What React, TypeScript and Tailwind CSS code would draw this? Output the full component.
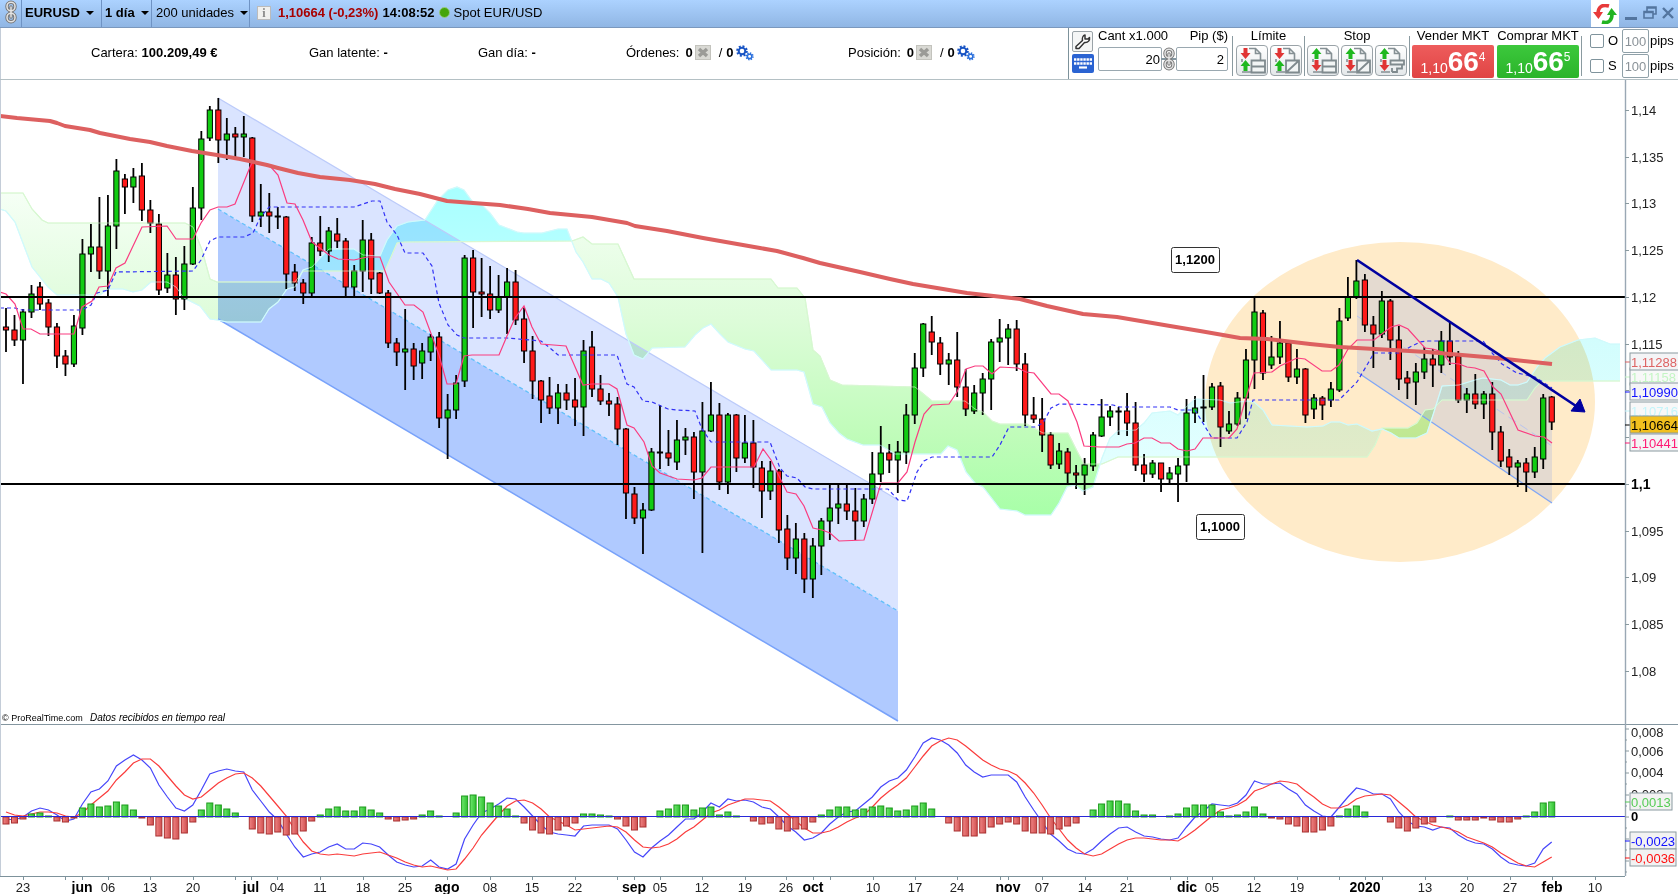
import type { ReactNode } from 'react';

type Candle = [high: number, top: number, bottom: number, low: number, up: 0 | 1];

const STEP = 8.493;
const FIRST_X = 6;
const AXIS_X = 1625;
const ZERO_Y = 817;

const xAt = (i: number) => FIRST_X + i * STEP;

// high, body top, body bottom, low, 1 = up day
const candles: Candle[] = [
  [308, 327, 330, 352, 0], [315, 330, 340, 346, 0], [309, 312, 340, 384, 1], [285, 294, 312, 318, 1],
  [282, 287, 304, 310, 0], [299, 303, 327, 336, 0], [323, 327, 356, 368, 0], [350, 356, 364, 376, 0],
  [315, 326, 364, 367, 1], [239, 254, 328, 335, 1], [224, 247, 254, 272, 1], [197, 247, 271, 279, 0],
  [195, 226, 271, 296, 1], [159, 171, 226, 249, 1], [174, 179, 187, 214, 0], [168, 177, 187, 203, 1],
  [163, 176, 210, 221, 0], [200, 210, 223, 233, 0], [214, 224, 290, 295, 0], [253, 275, 288, 293, 1],
  [257, 275, 299, 315, 0], [246, 264, 299, 310, 1], [187, 208, 264, 265, 1], [131, 139, 208, 220, 1],
  [106, 110, 138, 141, 1], [98, 110, 140, 163, 0], [118, 134, 140, 160, 1], [127, 134, 137, 158, 0],
  [116, 134, 137, 157, 1], [137, 138, 216, 222, 0], [184, 212, 216, 227, 1], [193, 212, 216, 233, 0],
  [207, 216, 217, 229, 0], [216, 217, 274, 289, 0], [264, 272, 283, 291, 0], [279, 283, 293, 304, 0],
  [237, 243, 293, 296, 1], [216, 243, 251, 256, 0], [227, 231, 251, 262, 1], [218, 234, 241, 248, 0],
  [238, 241, 287, 296, 0], [265, 271, 287, 296, 1], [220, 240, 271, 292, 1], [233, 240, 279, 294, 0],
  [272, 273, 293, 294, 0], [290, 293, 343, 348, 0], [338, 343, 352, 366, 0], [309, 349, 352, 390, 1],
  [343, 349, 366, 380, 0], [343, 351, 363, 379, 1], [334, 337, 352, 361, 1], [332, 337, 418, 428, 0],
  [394, 410, 418, 459, 1], [375, 383, 410, 419, 1], [255, 258, 381, 387, 1], [250, 258, 292, 328, 0],
  [258, 292, 294, 317, 0], [266, 294, 310, 319, 0], [275, 297, 310, 313, 1], [268, 282, 297, 334, 1],
  [270, 282, 320, 325, 0], [307, 319, 351, 363, 0], [336, 351, 381, 399, 0], [380, 381, 400, 423, 0],
  [377, 396, 408, 414, 0], [384, 393, 408, 424, 1], [384, 393, 400, 410, 0], [378, 400, 407, 426, 0],
  [340, 351, 407, 436, 1], [331, 347, 389, 397, 0], [375, 389, 401, 405, 0], [393, 401, 404, 416, 0],
  [397, 404, 429, 445, 0], [428, 429, 493, 519, 0], [487, 494, 518, 524, 0], [503, 510, 518, 554, 1],
  [448, 452, 510, 511, 1], [405, 452, 453, 469, 0], [430, 453, 458, 466, 0], [420, 440, 462, 470, 1],
  [428, 437, 440, 455, 1], [432, 437, 472, 499, 0], [402, 431, 472, 553, 1], [382, 415, 431, 432, 1],
  [403, 415, 482, 490, 0], [413, 415, 482, 494, 1], [414, 415, 458, 472, 0], [415, 443, 458, 463, 1],
  [420, 443, 467, 488, 0], [461, 468, 491, 518, 0], [461, 471, 491, 500, 1], [469, 471, 530, 543, 0],
  [515, 529, 558, 570, 0], [523, 539, 558, 574, 1], [533, 539, 579, 593, 0], [538, 546, 579, 598, 1],
  [518, 521, 546, 575, 1], [484, 508, 521, 540, 1], [485, 504, 508, 524, 1], [484, 504, 511, 520, 0],
  [488, 511, 521, 540, 0], [494, 499, 521, 527, 1], [452, 474, 499, 504, 1], [426, 453, 474, 482, 1],
  [444, 453, 460, 473, 0], [441, 452, 460, 493, 1], [404, 415, 452, 464, 1], [353, 368, 415, 424, 1],
  [323, 324, 368, 377, 1], [316, 332, 342, 355, 0], [337, 343, 364, 375, 0], [353, 360, 364, 385, 1],
  [332, 360, 387, 397, 0], [369, 387, 409, 416, 0], [385, 393, 411, 414, 1], [373, 379, 393, 415, 1],
  [339, 342, 379, 410, 1], [319, 338, 342, 362, 1], [324, 329, 338, 365, 1], [320, 329, 364, 371, 0],
  [353, 364, 415, 426, 0], [397, 415, 419, 423, 0], [398, 419, 435, 452, 0], [432, 435, 465, 469, 0],
  [443, 451, 464, 469, 1], [448, 452, 473, 483, 0], [465, 473, 475, 489, 0], [458, 465, 475, 495, 1],
  [432, 435, 466, 471, 1], [399, 417, 436, 437, 1], [406, 411, 417, 426, 1], [407, 411, 412, 435, 0],
  [393, 411, 423, 436, 0], [402, 423, 465, 471, 0], [454, 465, 474, 482, 0], [460, 463, 474, 478, 1],
  [463, 463, 479, 492, 0], [467, 473, 479, 483, 1], [458, 466, 474, 502, 1], [399, 413, 465, 482, 1],
  [396, 408, 413, 423, 1], [375, 407, 408, 422, 0], [383, 387, 407, 410, 1], [382, 386, 427, 447, 0],
  [411, 424, 431, 434, 1], [392, 398, 424, 426, 1], [349, 360, 398, 419, 1], [297, 312, 360, 389, 1],
  [310, 313, 373, 380, 0], [336, 357, 365, 369, 1], [321, 343, 357, 364, 1], [342, 343, 377, 382, 0],
  [349, 369, 377, 384, 1], [368, 369, 415, 423, 0], [394, 398, 409, 419, 1], [396, 398, 405, 420, 0],
  [382, 389, 400, 407, 1], [308, 321, 390, 392, 1], [277, 297, 318, 321, 1], [260, 281, 297, 299, 1],
  [274, 280, 325, 332, 0], [316, 325, 334, 368, 0], [291, 301, 334, 338, 1], [299, 301, 340, 360, 0],
  [326, 340, 379, 390, 0], [371, 378, 383, 399, 0], [363, 372, 382, 405, 1], [347, 359, 372, 379, 1],
  [349, 359, 365, 387, 0], [331, 341, 365, 373, 1], [322, 341, 357, 365, 0], [351, 356, 400, 403, 0],
  [388, 394, 400, 413, 1], [374, 394, 404, 409, 0], [391, 394, 404, 419, 1], [382, 394, 432, 450, 0],
  [426, 432, 461, 467, 0], [449, 457, 467, 475, 0], [460, 463, 467, 487, 1], [458, 463, 472, 492, 0],
  [447, 457, 472, 478, 1], [394, 398, 459, 469, 1], [396, 397, 422, 430, 0],
];

const average200 =
  '0,116 17,118 50,121 57,123 65,126 90,130 100,133 130,139 150,142 167,146 192,151 217,155 240,159 267,165 278,168 298,173 320,177 350,180 375,184 395,189 420,194 447,201 473,203 500,205 528,209 550,213 592,217 627,223 635,226 667,231 703,238 760,248 777,251 803,258 820,263 860,272 890,279 913,284 967,293 1020,299 1047,306 1083,314 1117,317 1170,326 1200,331 1223,335 1240,338 1267,339 1310,344 1340,347 1427,352 1497,358 1552,364';

const tenkan =
  '0,292 6,294 15,304 23,329 31,329 40,334 74,334 82,307 92,301 99,287 108,286 116,268 125,263 142,227 167,226 176,239 193,239 201,223 210,210 218,207 227,207 235,204 250,167 253,161 270,166 278,175 287,203 295,204 303,220 312,242 329,255 338,259 354,260 367,257 380,257 389,282 405,305 414,305 423,312 439,355 447,384 456,384 464,356 472,355 499,355 507,336 515,318 524,306 532,327 541,344 566,346 583,385 592,384 609,384 617,389 627,425 634,428 644,442 652,466 660,473 677,479 694,480 702,478 711,467 754,467 763,449 771,460 787,492 796,494 804,506 813,528 822,530 830,533 839,541 864,540 881,483 898,483 907,472 915,442 924,414 932,405 949,404 957,392 966,369 975,366 983,366 992,374 1000,367 1018,368 1026,372 1034,373 1051,394 1059,394 1068,401 1077,422 1084,446 1100,447 1119,447 1127,444 1135,443 1144,438 1152,438 1161,443 1170,443 1178,449 1187,451 1195,449 1203,438 1229,438 1237,429 1246,398 1254,373 1272,372 1280,366 1297,358 1305,359 1322,371 1331,371 1339,365 1348,349 1357,340 1374,340 1391,327 1399,325 1408,329 1425,348 1433,349 1442,352 1450,363 1459,364 1467,367 1475,368 1484,371 1493,387 1501,394 1510,413 1518,430 1535,436 1544,437 1552,443';

const kijun =
  '0,308 15,308 22,310 82,310 91,305 97,293 108,290 116,272 193,271 201,260 210,241 218,237 244,237 253,233 260,218 269,207 354,207 372,201 380,201 387,222 397,235 405,253 423,253 432,266 439,303 448,325 457,335 464,338 507,338 541,341 550,348 558,355 617,355 627,384 634,387 643,401 652,402 668,409 677,410 695,411 702,429 711,442 770,442 780,468 787,476 797,478 805,487 813,489 888,489 898,500 907,501 912,487 917,472 924,461 932,457 992,457 1000,445 1009,427 1035,427 1043,423 1051,408 1059,404 1113,405 1120,407 1170,407 1178,410 1195,410 1212,438 1237,438 1247,422 1253,400 1339,400 1357,382 1367,365 1374,353 1399,353 1410,347 1420,342 1428,341 1483,341 1493,354 1502,364 1517,373 1535,377 1552,388';

const spanA =
  '0,209 6,211 15,222 32,267 48,287 57,295 100,295 108,289 123,289 133,292 142,290 151,282 167,282 176,287 184,298 200,306 210,319 217,320 227,322 261,322 269,309 278,302 287,289 295,287 303,270 312,267 320,258 329,249 354,249 363,255 380,256 387,240 397,226 408,222 425,220 438,200 448,190 457,187 464,190 472,201 482,205 490,213 499,225 517,232 524,233 542,233 558,229 567,229 576,252 583,262 592,279 601,279 609,283 618,297 626,334 634,355 643,359 652,348 685,347 695,335 703,328 711,324 720,334 728,342 745,349 754,351 771,370 797,370 804,372 813,404 822,407 830,423 839,433 847,439 863,445 880,445 895,454 941,454 948,446 957,450 966,472 975,483 983,487 1000,509 1017,511 1025,515 1051,515 1059,503 1067,487 1075,485 1083,491 1093,487 1102,458 1110,438 1118,431 1136,430 1144,423 1152,413 1170,411 1178,415 1185,408 1192,402 1195,399 1220,400 1230,403 1247,401 1254,402 1263,410 1272,425 1307,427 1323,426 1331,422 1340,422 1348,425 1357,424 1372,431 1382,429 1391,433 1399,438 1416,438 1427,433 1433,415 1442,386 1459,385 1475,380 1483,378 1501,380 1510,385 1518,385 1527,382 1537,367 1545,358 1560,347 1578,340 1595,338 1610,344 1620,344';

const spanB =
  '0,193 23,193 32,209 42,220 48,223 185,223 193,227 202,250 210,279 217,282 295,282 303,271 385,271 397,243 405,242 572,241 583,237 592,244 618,244 634,279 771,279 778,288 797,288 805,298 813,350 820,356 830,380 842,385 915,387 932,401 965,401 975,409 983,412 992,421 1000,424 1027,424 1043,433 1068,433 1077,451 1084,464 1102,464 1118,457 1367,457 1375,445 1382,428 1408,428 1417,423 1425,410 1433,409 1442,400 1527,400 1535,388 1542,381 1620,381';

const macd = [
  819, 820, 817, 811, 808, 810, 815, 821, 819, 804, 792, 789, 781, 766, 760, 755, 760, 768, 785, 797, 808, 811,
  805, 790, 774, 771, 769, 771, 772, 790, 801, 812, 820, 834, 847, 857, 854, 852, 847, 844, 849, 849, 843, 844,
  847, 855, 862, 865, 867, 866, 860, 867, 869, 864, 839, 825, 813, 809, 804, 798, 799, 807, 816, 825, 832, 834,
  835, 836, 826, 825, 825, 825, 829, 840, 852, 857, 848, 841, 835, 827, 819, 819, 812, 803, 807, 799, 801, 800,
  802, 807, 809, 817, 826, 832, 840, 838, 833, 824, 817, 812, 811, 804, 797, 787, 781, 778, 770, 757, 743, 738,
  740, 745, 753, 765, 772, 777, 775, 775, 775, 782, 797, 810, 822, 834, 841, 849, 853, 854, 849, 841, 834, 828,
  827, 832, 836, 837, 839, 840, 838, 827, 817, 811, 804, 805, 806, 803, 795, 781, 784, 784, 783, 789, 794, 805,
  811, 816, 817, 807, 797, 788, 790, 794, 794, 799, 812, 821, 826, 827, 830, 827, 828, 835, 840, 843, 844, 849,
  857, 863, 865, 866, 863, 849, 842,
];

const signal = [
  812, 815, 816, 814, 812, 812, 813, 816, 817, 813, 805, 798, 791, 780, 772, 763, 759, 759, 766, 776, 786, 795,
  799, 797, 790, 783, 778, 774, 773, 778, 786, 796, 806, 816, 830, 842, 851, 854, 855, 854, 855, 856, 854, 853,
  852, 855, 858, 862, 865, 867, 866, 868, 870, 869, 859, 848, 835, 825, 815, 806, 801, 800, 803, 809, 817, 821,
  825, 830, 829, 828, 827, 826, 827, 832, 840, 847, 848, 847, 844, 839, 832, 827, 820, 813, 810, 805, 802, 799,
  799, 800, 801, 807, 814, 821, 828, 833, 833, 831, 827, 822, 818, 815, 807, 798, 791, 785, 778, 767, 756, 746,
  741, 738, 740, 746, 753, 760, 765, 769, 771, 775, 783, 793, 805, 818, 829, 840, 848, 854, 856, 854, 849, 844,
  840, 838, 838, 839, 840, 840, 841, 836, 830, 823, 816, 810, 808, 805, 800, 791, 788, 784, 781, 782, 784, 791,
  797, 804, 808, 808, 805, 799, 796, 795, 794, 795, 802, 809, 817, 821, 825, 827, 829, 832, 837, 840, 843, 847,
  853, 858, 863, 866, 867, 862, 857,
];

const histogram = [
  -7, -6, -2, 3, 4, 1, -4, -5, -1, 9, 13, 10, 11, 15, 12, 7, -1, -8, -19, -21, -22, -16, -5, 7, 14, 12, 8, 4, 0,
  -12, -16, -17, -15, -18, -17, -14, -4, 2, 8, 10, 6, 6, 10, 7, 4, -2, -4, -3, -2, 2, 6, 1, 0, 4, 21, 22, 20, 14,
  11, 8, 1, -6, -13, -16, -17, -13, -9, -6, 3, 3, 2, 1, -2, -9, -13, -10, 0, 6, 8, 12, 12, 7, 9, 10, 2, 5, 1, 0,
  -4, -7, -6, -12, -14, -12, -12, -5, 2, 7, 10, 10, 7, 8, 10, 11, 9, 6, 7, 11, 14, 8, 0, -6, -14, -19, -19, -16,
  -10, -7, -5, -7, -14, -16, -16, -17, -12, -9, -6, 0, 7, 13, 16, 16, 13, 6, 2, 2, 0, 1, 3, 9, 12, 12, 12, 5, 1,
  2, 5, 10, 3, -1, -2, -7, -9, -15, -15, -13, -9, 1, 8, 11, 5, 0, 0, -5, -11, -14, -11, -7, -5, 0, 1, -3, -3, -3,
  -1, -3, -5, -5, -2, 1, 5, 14, 15,
];

const priceTicks = [
  { y: 110, text: '1,14' }, { y: 157, text: '1,135' }, { y: 203, text: '1,13' }, { y: 250, text: '1,125' },
  { y: 297, text: '1,12' }, { y: 344, text: '1,115' }, { y: 390, text: '' }, { y: 437, text: '' },
  { y: 484, text: '1,1', bold: true }, { y: 531, text: '1,095' }, { y: 577, text: '1,09' },
  { y: 624, text: '1,085' }, { y: 671, text: '1,08' },
];

const priceTags = [
  { y: 377, text: '1,11158', color: '#c4f5c4', fill: '#f8f8f8' },
  { y: 362, text: '1,11288', color: '#dd6464', fill: '#f4f4f6' },
  { y: 411, text: '1,10716', color: '#c4f5fa', fill: '#f8f8f8' },
  { y: 392, text: '1,10990', color: '#1010ff', fill: '#f4f4f6' },
  { y: 443, text: '1,10441', color: '#ff1a75', fill: '#f4f4f6' },
  { y: 425, text: '1,10664', color: '#000000', fill: '#f2c01e' },
];

const macdTags = [
  { y: 802, text: '0,0013', color: '#55cc55' },
  { y: 841, text: '-0,0023', color: '#1010ff' },
  { y: 858, text: '-0,0036', color: '#ff1010' },
];

const dates: [number, string][] = [
  [23, '23'], [82, 'jun'], [108, '06'], [150, '13'], [193, '20'], [251, 'jul'], [277, '04'], [320, '11'],
  [363, '18'], [405, '25'], [447, 'ago'], [490, '08'], [532, '15'], [575, '22'], [634, 'sep'], [660, '05'],
  [702, '12'], [745, '19'], [786, '26'], [813, 'oct'], [873, '10'], [915, '17'], [957, '24'], [1008, 'nov'],
  [1042, '07'], [1085, '14'], [1127, '21'], [1187, 'dic'], [1212, '05'], [1254, '12'], [1297, '19'],
  [1365, '2020'], [1425, '13'], [1467, '20'], [1510, '27'], [1552, 'feb'], [1595, '10'],
];

const bareTicks = [65, 235, 617, 830, 1000, 1170, 1339, 1382];

const linePoints = (values: number[]) => values.map((y, i) => `${xAt(i).toFixed(1)},${y}`).join(' ');

function Caret() {
  return (
    <svg className="w-2 h-1 shrink-0" viewBox="0 0 8 4" aria-hidden="true">
      <path d="M0 0H8L4 4Z" fill="#000" />
    </svg>
  );
}

function ChainIcon({ bar = false }: { bar?: boolean }) {
  return (
    <svg className="w-4 h-6 shrink-0" viewBox="0 0 16 24" fill="none" aria-hidden="true">
      {bar && <path d="M0 12H16" stroke="#8496a0" strokeWidth="2" />}
      <g stroke="#777" strokeWidth="3.4">
        <rect x="4" y="2.2" width="8" height="8.6" rx="4" />
        <rect x="4" y="13.2" width="8" height="8.6" rx="4" />
        <path d="M8 7V17" strokeLinecap="round" />
      </g>
      <g stroke="#e4e4e4" strokeWidth="1.5">
        <rect x="4" y="2.2" width="8" height="8.6" rx="4" />
        <rect x="4" y="13.2" width="8" height="8.6" rx="4" />
        <path d="M8 7V17" strokeLinecap="round" />
      </g>
    </svg>
  );
}

function CloseBadge() {
  return (
    <svg className="w-4 h-4" viewBox="0 0 16 16" aria-hidden="true">
      <rect x="0.5" y="0.5" width="15" height="14" fill="#d9d9d4" stroke="#c3c3bd" />
      <path d="M4 4L12 11M12 4L4 11" stroke="#9b9b97" strokeWidth="3.5" />
    </svg>
  );
}

function Gears() {
  return (
    <svg className="w-[18px] h-4" viewBox="0 0 18 16" fill="none" aria-hidden="true">
      <circle cx="6" cy="6" r="4.6" stroke="#1a55c4" strokeWidth="2.4" strokeDasharray="1.9 1.7" />
      <circle cx="6" cy="6" r="3.3" stroke="#1a55c4" strokeWidth="2" />
      <circle cx="13.6" cy="11.4" r="3.2" stroke="#2a6fdc" strokeWidth="1.8" strokeDasharray="1.3 1.2" />
      <circle cx="13.6" cy="11.4" r="2.2" stroke="#2a6fdc" strokeWidth="1.5" />
    </svg>
  );
}

function OrderIcon({ kind, limit }: { kind: 'lines' | 'slash' | 'trail'; limit: boolean }) {
  const down = '#e03434';
  const up = '#1fb81f';
  return (
    <svg className="w-[30px] h-[29px] shrink-0" viewBox="0 0 30 29" fill="none" aria-hidden="true">
      <path d="M5 13V16M12 2.5H18.5L23.5 7.5V14M18.5 2.5V7.5H23.5M5 26H14" stroke="#859094" strokeWidth="1.6" />
      {limit ? (
        <>
          <path d="M6.5 2H10.5V7H13.5L8.5 13L3.5 7H6.5Z" fill={down} />
          <path d="M6.5 25H10.5V20H13.5L8.5 14L3.5 20H6.5Z" fill={up} />
        </>
      ) : (
        <>
          <path d="M6.5 13H10.5V8H13.5L8.5 2L3.5 8H6.5Z" fill={up} />
          <path d="M6.5 14H10.5V19H13.5L8.5 25L3.5 19H6.5Z" fill={down} />
        </>
      )}
      {kind === 'lines' && (
        <path d="M14.5 14.5H28V26.5H14.5ZM14.5 20.5H28" fill="#f2f5f5" stroke="#7f8a8e" strokeWidth="1.8" />
      )}
      {kind === 'slash' && (
        <path d="M15 14.5H28V26.5H15ZM15 26.5L28 14.5" fill="#f2f5f5" stroke="#7f8a8e" strokeWidth="1.8" />
      )}
      {kind === 'trail' && (
        <path d="M14.5 14.5H28V18.5H14.5ZM26 19V22.5H21V26H16M16 22V26" fill="#f2f5f5" stroke="#7f8a8e" strokeWidth="1.8" />
      )}
    </svg>
  );
}

function TitleBar() {
  return (
    <header className="flex h-7 items-center border-b border-[#7b98bd] bg-linear-to-b from-[#acd2ff] to-[#90b6e4] text-[13px]">
      <div className="flex h-full w-[21px] justify-center">
        <ChainIcon />
      </div>
      <button className="flex h-full w-20 items-center gap-1.5 border-l border-[#6f93c4] pb-0.5 pl-[3px] font-bold">
        EURUSD <Caret />
      </button>
      <button className="flex h-full w-[50px] items-center gap-1.5 border-l border-[#6f93c4] pb-0.5 pl-[3px] font-bold">
        <span className="whitespace-nowrap">1 día</span> <Caret />
      </button>
      <button className="flex h-full w-[98px] items-center gap-1.5 border-l border-[#6f93c4] pb-0.5 pl-1">
        <span className="whitespace-nowrap">200 unidades</span> <Caret />
      </button>
      <div className="flex h-full flex-1 items-center border-l border-[#6f93c4] pb-0.5 pl-[7px]">
        <span className="flex h-3.5 w-3.5 items-center justify-center border border-[#bbb] bg-[#f0f0ee] font-['Liberation_Serif',serif] text-xs leading-3 font-bold text-[#888]">
          i
        </span>
        <span className="ml-[7px] font-bold text-[#a80000]">1,10664 (-0,23%)</span>
        <span className="ml-1 font-bold">14:08:52</span>
        <span className="mx-1 h-[11px] w-[11px] rounded-full border border-[#9ac98a] bg-[#44a50a]" />
        <span>Spot EUR/USD</span>
      </div>
      <div className="flex h-full w-7 items-center justify-center bg-white">
        <svg className="h-5 w-6" viewBox="0 0 24 20" fill="none" aria-hidden="true">
          <path d="M16 2C9 0 5 3 5 10" stroke="#e83a3a" strokeWidth="3.6" />
          <path d="M0 8H10L5.5 15Z" fill="#e83a3a" />
          <path d="M9 18C16 20 19 16 19 10" stroke="#22b422" strokeWidth="3.6" />
          <path d="M14 11H24L18.5 4Z" fill="#22b422" />
        </svg>
      </div>
      <div className="flex h-full w-[59px] items-center justify-between pr-1 pb-0.5 pl-1.5">
        <button aria-label="Minimizar">
          <svg className="h-4 w-3" viewBox="0 0 12 16" aria-hidden="true">
            <path d="M0 12H12V15H0Z" fill="#53759f" />
          </svg>
        </button>
        <button aria-label="Restaurar">
          <svg className="h-3.5 w-3.5" viewBox="0 0 14 14" fill="none" aria-hidden="true">
            <path d="M4 5V1H13V8H10M4 2H13M1 5.5H10V12H1ZM1 6.5H10" stroke="#53759f" strokeWidth="1.6" />
          </svg>
        </button>
        <button aria-label="Cerrar">
          <svg className="h-3.5 w-3" viewBox="0 0 12 14" aria-hidden="true">
            <path d="M1 2L11 12M11 2L1 12" stroke="#53759f" strokeWidth="2.4" />
          </svg>
        </button>
      </div>
    </header>
  );
}

function Counter({ label }: { label: string }) {
  return (
    <div className="flex items-center whitespace-nowrap">
      <span className="mr-1.5">{label}</span>
      <b>0</b>
      <span className="mx-0.5"><CloseBadge /></span>
      <span className="ml-1.5">/</span>
      <b className="mr-0.5 ml-1">0</b>
      <Gears />
    </div>
  );
}

function Figure({ label, value }: { label: string; value: string }) {
  return (
    <div className="whitespace-nowrap">
      {label} <b>{value}</b>
    </div>
  );
}

function OrderButton({ label, children }: { label: string; children: ReactNode }) {
  return (
    <button
      aria-label={label}
      className="flex h-[31px] w-8 items-center justify-center rounded-sm border border-[#9aa3a8] bg-linear-to-b from-white to-[#e4e8ea]"
    >
      {children}
    </button>
  );
}

function DealButton({ title, sup, className }: { title: string; sup: string; className: string }) {
  return (
    <div className="flex w-[82px] flex-col items-center">
      <span className="h-[17px] leading-4 whitespace-nowrap">{title}</span>
      <button className={`flex h-[33px] w-full items-end justify-center rounded-xs text-white ${className}`}>
        <span className="pb-0.5 text-sm leading-4">1,10</span>
        <span className="text-[28px] leading-8 font-bold">66</span>
        <span className="self-start pt-1 text-xs leading-4">{sup}</span>
      </button>
    </div>
  );
}

function PipsRow({ label, name }: { label: string; name: string }) {
  return (
    <div className="flex items-center">
      <label className="flex w-8 items-center gap-1">
        <input type="checkbox" className="h-3.5 w-3.5 appearance-none rounded-xs border border-[#7f939c] bg-white" />
        {label}
      </label>
      <label className="flex items-center">
        <input
          aria-label={name}
          defaultValue="100"
          className="h-6 w-[27px] rounded-xs border border-[#8fa0a8] bg-white text-center text-[#8a9298]"
        />
        <span className="ml-px">pips</span>
      </label>
    </div>
  );
}

function Divider() {
  return <div className="mt-2 h-10 border-l border-[#8a9aa0]" />;
}

function TradingBar() {
  return (
    <section className="flex h-[52px] border-b border-[#b4c0c4] text-[13px]">
      <div className="grid flex-1 grid-cols-[218fr_169fr_148fr_222fr_220fr] items-center border-l border-[#c4cdd8] pb-px pl-[90px]">
        <Figure label="Cartera:" value="100.209,49 €" />
        <Figure label="Gan latente:" value="-" />
        <Figure label="Gan día:" value="-" />
        <Counter label="Órdenes:" />
        <Counter label="Posición:" />
      </div>
      <div className="flex w-[610px] border-l border-[#7d929b] pl-[3px]">
        <div className="flex w-[26px] flex-col items-start gap-0.5 pt-[3px]">
          <button aria-label="Configuración" className="flex h-[21px] w-[21px] items-center justify-center rounded-xs border border-[#9aa3a8] bg-[#f5f6f6]">
            <svg className="h-[17px] w-[17px]" viewBox="0 0 17 17" fill="none" aria-hidden="true">
              <path
                d="M2 13.5L8.5 7.5C8 5 9 2.5 11 2V6H14L15.5 4.5C16 7.5 14 9.5 11.5 9.5H10.5L5 15.5H2Z"
                fill="#fff"
                stroke="#333"
                strokeWidth="1.5"
                strokeLinejoin="round"
              />
            </svg>
          </button>
          <button aria-label="Teclado" className="flex h-[19px] w-[22px] items-center justify-center rounded-xs bg-[#2a63d2]">
            <svg className="h-[13px] w-[18px]" viewBox="0 0 18 13" aria-hidden="true">
              <path d="M0 2.5H18M0 6.5H18" stroke="#fff" strokeWidth="2.6" strokeDasharray="2.4 0.72" />
              <path d="M5 10.5H13" stroke="#fff" strokeWidth="2.2" />
            </svg>
          </button>
        </div>
        <label className="flex w-16 flex-col">
          <span className="h-[19px] leading-4 whitespace-nowrap">Cant x1.000</span>
          <input defaultValue="20" className="h-6 w-full rounded-xs border border-[#9aa8b0] pr-px text-right" />
        </label>
        <div className="-mx-px flex items-end pb-2">
          <ChainIcon bar />
        </div>
        <label className="flex w-[52px] flex-col">
          <span className="h-[19px] text-right leading-4 whitespace-nowrap">Pip ($)</span>
          <input defaultValue="2" className="h-6 w-full rounded-xs border border-[#9aa8b0] pr-[3px] text-right" />
        </label>
        <div className="w-1" />
        <Divider />
        <div className="flex w-[71px] flex-col items-center">
          <span className="h-[17px] leading-4">Límite</span>
          <div className="flex gap-0.5">
            <OrderButton label="Límite"><OrderIcon kind="lines" limit /></OrderButton>
            <OrderButton label="Límite objetivo"><OrderIcon kind="slash" limit /></OrderButton>
          </div>
        </div>
        <Divider />
        <div className="flex w-[104px] flex-col items-center">
          <span className="h-[17px] leading-4">Stop</span>
          <div className="flex gap-0.5">
            <OrderButton label="Stop"><OrderIcon kind="lines" limit={false} /></OrderButton>
            <OrderButton label="Stop objetivo"><OrderIcon kind="slash" limit={false} /></OrderButton>
            <OrderButton label="Trailing stop"><OrderIcon kind="trail" limit={false} /></OrderButton>
          </div>
        </div>
        <Divider />
        <div className="ml-0.5 flex gap-[3px]">
          <DealButton title="Vender MKT" sup="4" className="bg-linear-to-b from-[#ee5c5c] to-[#e04444]" />
          <DealButton title="Comprar MKT" sup="5" className="bg-linear-to-b from-[#3cc83c] to-[#2ab42a]" />
        </div>
        <div className="w-0.5" />
        <Divider />
        <div className="ml-2 flex flex-col gap-px pt-px">
          <PipsRow label="O" name="Pips objetivo" />
          <PipsRow label="S" name="Pips stop" />
        </div>
      </div>
    </section>
  );
}

function Clouds() {
  return (
    <g>
      <defs>
        <linearGradient id="greenCloud" gradientUnits="userSpaceOnUse" x1="0" y1="190" x2="0" y2="515">
          <stop offset="0" stopColor="#f6fff6" />
          <stop offset="0.4" stopColor="#ddfcd9" />
          <stop offset="0.75" stopColor="#c0fcba" />
          <stop offset="1" stopColor="#a8ffa8" />
        </linearGradient>
        <linearGradient id="cyanCloud" gradientUnits="userSpaceOnUse" x1="0" y1="190" x2="0" y2="460">
          <stop offset="0" stopColor="#a8ffff" />
          <stop offset="0.3" stopColor="#baffff" />
          <stop offset="0.55" stopColor="#d2fdfd" />
          <stop offset="1" stopColor="#e2ffff" />
        </linearGradient>
        <clipPath id="aboveB">
          <polygon points={`0,80 ${spanB} 1620,80`} />
        </clipPath>
        <clipPath id="aboveA">
          <polygon points={`0,80 ${spanA} 1620,80`} />
        </clipPath>
      </defs>
      <polygon points={`0,720 ${spanA} 1620,720`} fill="url(#cyanCloud)" clipPath="url(#aboveB)" />
      <polygon points={`0,720 ${spanB} 1620,720`} fill="url(#greenCloud)" clipPath="url(#aboveA)" />
    </g>
  );
}

function AxisTag({ y, text, color, fill }: { y: number; text: string; color: string; fill: string }) {
  return (
    <g>
      <path d={`M${AXIS_X} ${y}H1630`} stroke={color} />
      <rect x="1630" y={y - 9} width="52" height="17" fill={fill} stroke="#8a9aa0" />
      <text x="1631" y={y + 5} fill={color}>{text}</text>
    </g>
  );
}

function PriceChart() {
  return (
    <svg viewBox="0 80 1678 644" className="block h-auto w-full text-[13px]" role="img" aria-label="EURUSD, 1 día">
      <Clouds />

      {/* descending channel, jun - oct */}
      <g className="mix-blend-multiply">
        <polygon points="218,98 898,500 898,611 218,209" fill="#dae4ff" />
        <polygon points="218,209 898,611 898,721 218,319" fill="#b0caff" />
      </g>
      <path d="M218 98L898 500" stroke="#bccbfa" strokeWidth="1.2" />
      <path d="M218 319L898 721" stroke="#78a2fa" strokeWidth="1.5" />
      <path d="M218 209L898 611" stroke="#62c0fa" strokeWidth="1.3" strokeDasharray="4 3" />

      <ellipse cx="1400" cy="402" rx="195" ry="160" fill="#ffebc9" className="mix-blend-multiply" />
      <polygon points="1357,260 1552,391 1552,503 1357,372" fill="#7896f0" fillOpacity="0.2" />
      <path d="M1357 372L1552 503" stroke="#7fa6f5" strokeWidth="1.3" />
      <path d="M1357 316L1552 446" stroke="#b9c4ee" strokeDasharray="9 5" />

      <polyline points={spanB} fill="none" stroke="#cff5c8" strokeWidth="1.2" />
      <polyline points={spanA} fill="none" stroke="#ccf8fa" strokeWidth="1.2" />

      {candles.map(([high, top, bottom, low, up], i) => {
        const x = xAt(i);
        return (
          <g key={i} stroke="#000">
            <path d={`M${x} ${high}V${low}`} strokeWidth="1.8" />
            <rect
              x={x - 2.6}
              y={top}
              width="5.2"
              height={Math.max(bottom - top, 0.5)}
              fill={up ? '#12cc12' : '#ff1a1a'}
            />
          </g>
        );
      })}

      <polyline points={spanB} fill="none" stroke="#e0fadb" strokeOpacity="0.6" />
      <polyline points={spanA} fill="none" stroke="#d4fbfd" strokeOpacity="0.6" />
      <polyline points={kijun} fill="none" stroke="#3232f5" strokeWidth="1.2" strokeDasharray="4 3" />
      <polyline points={tenkan} fill="none" stroke="#fa3c80" strokeWidth="1.2" />
      <path d={`M0 297H${AXIS_X}M0 484H${AXIS_X}`} stroke="#000" strokeWidth="1.8" />
      <polyline points={average200} fill="none" stroke="#dd6060" strokeWidth="4" strokeLinejoin="round" />

      <path d="M1357 260L1576 406" stroke="#0000a0" strokeWidth="2.6" />
      <path d="M1585 412L1580 399L1571 411Z" fill="#0000a0" stroke="#0000a0" />

      <g stroke="#333" fill="#fff">
        <rect x="1171.5" y="247.5" width="48" height="25" rx="2" />
        <rect x="1196.5" y="514.5" width="48" height="25" rx="2" />
      </g>
      <g className="font-bold" textAnchor="middle">
        <text x="1195" y="264">1,1200</text>
        <text x="1220" y="531">1,1000</text>
      </g>

      {/* price axis */}
      <path d={`M${AXIS_X}.5 80V724`} stroke="#9aa8b4" strokeWidth="1.4" />
      {priceTicks.map(({ y, text, bold }) => (
        <g key={y}>
          <path d={`M${AXIS_X} ${y}.5h4`} stroke="#8a9aa0" />
          <text x="1631" y={y + 5} className={bold ? 'text-sm font-bold' : ''} fill={bold ? '#000' : '#222'}>
            {text}
          </text>
        </g>
      ))}
      {priceTags.map(tag => <AxisTag key={tag.text} {...tag} />)}

      <text x="2" y="721" className="text-[9px]">© ProRealTime.com</text>
      <text x="90" y="721" className="text-[10px] italic">Datos recibidos en tiempo real</text>
      <path d="M0.5 80V724" stroke="#c4cdd8" />
    </svg>
  );
}

function MacdChart() {
  return (
    <svg viewBox="0 724 1678 170" className="block h-auto w-full text-[13px]" role="img" aria-label="MACD">
      <defs>
        <linearGradient id="upBar">
          <stop offset="0" stopColor="#6fe86f" />
          <stop offset="1" stopColor="#2fc02f" />
        </linearGradient>
        <linearGradient id="downBar">
          <stop offset="0" stopColor="#f08484" />
          <stop offset="1" stopColor="#d05050" />
        </linearGradient>
      </defs>
      <polyline points={linePoints(macd)} fill="none" stroke="#4646fa" strokeWidth="1.2" />
      <polyline points={linePoints(signal)} fill="none" stroke="#fa3c3c" strokeWidth="1.2" />
      {histogram.map((value, i) =>
        value === 0 ? null : (
          <rect
            key={i}
            x={xAt(i) - 3}
            y={value > 0 ? ZERO_Y - value : ZERO_Y}
            width="6"
            height={Math.abs(value)}
            fill={value > 0 ? 'url(#upBar)' : 'url(#downBar)'}
            stroke={value > 0 ? '#1c9a1c' : '#a83030'}
          />
        ),
      )}
      <path d={`M0 816.5H${AXIS_X}`} stroke="#2828d8" />

      {/* value axis */}
      <path d="M0 724.5H1678" stroke="#8496a0" />
      <path d={`M${AXIS_X}.5 724V876`} stroke="#9aa8b4" strokeWidth="1.4" />
      {[729, 740, 751, 762, 773, 784, 795, 806, 817, 828, 839, 850, 861, 872].map((y, i) => (
        <path key={y} d={`M${AXIS_X} ${y}h${i % 2 ? 2 : 4}`} stroke="#8a9aa0" />
      ))}
      <g fill="#222">
        <text x="1631" y="737">0,008</text>
        <text x="1631" y="756">0,006</text>
        <text x="1631" y="777">0,004</text>
        <text x="1631" y="799">0,002</text>
      </g>
      <text x="1631" y="821" className="font-bold">0</text>
      {macdTags.map(tag => (
        <g key={tag.text}>
          <path d={`M${AXIS_X} ${tag.y}H1630`} stroke={tag.color} />
          <rect x="1630" y={tag.y - 9} width={tag.text.startsWith('-') ? 46 : 42} height="17" fill="#f2f2f2" stroke="#8a9aa0" />
          <text x="1631" y={tag.y + 5} fill={tag.color}>{tag.text}</text>
        </g>
      ))}

      {/* time axis */}
      <path d={`M0 876.5H${AXIS_X}`} stroke="#7d929b" />
      {bareTicks.map(x => <path key={x} d={`M${x}.5 877v3`} stroke="#7d929b" />)}
      {dates.map(([x, text]) => {
        const major = text.length > 2;
        return (
          <g key={x}>
            <path d={`M${x}.5 877v3`} stroke="#7d929b" />
            <text
              x={x}
              y="892"
              textAnchor="middle"
              className={major ? 'text-sm font-bold' : ''}
              fill={major ? '#000' : '#222'}
            >
              {text}
            </text>
          </g>
        );
      })}
      <path d="M0.5 724V876" stroke="#c4cdd8" />
    </svg>
  );
}

export default function App() {
  return (
    <main className="overflow-hidden bg-white font-['Liberation_Sans',Arial,sans-serif] text-black">
      <TitleBar />
      <TradingBar />
      <PriceChart />
      <MacdChart />
    </main>
  );
}
